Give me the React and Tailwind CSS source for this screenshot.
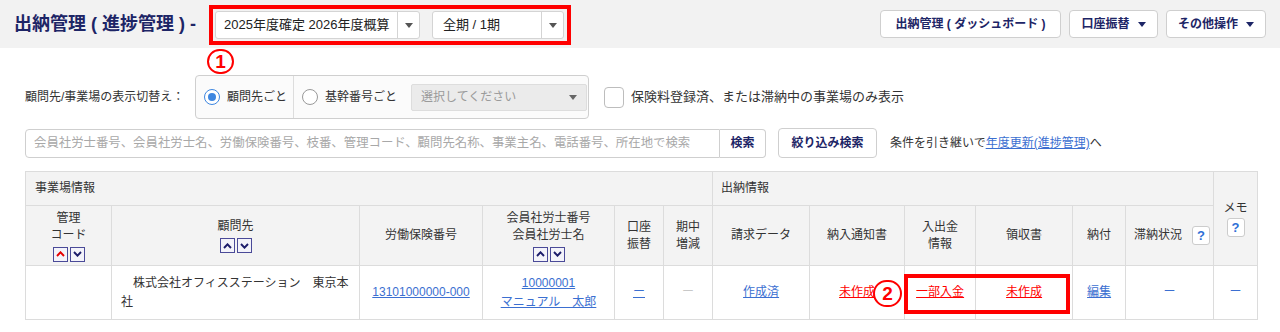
import React from "react";

const FONT = "font-['Liberation_Sans','Noto_Sans_CJK_JP',sans-serif]";

function Caret({ className = "fill-[#555]" }) {
  return (
    <svg width="8" height="5" viewBox="0 0 8 5" className={className}>
      <path d="M0 0 H8 L4 5 Z" />
    </svg>
  );
}

function SortBtns({ upActive }) {
  return (
    <div className="flex justify-center gap-[2px] mt-[3px]">
      <span className="w-[15px] h-[15px] border border-[#4a4a98] bg-[#f3f3fa] flex items-center justify-center">
        <svg width="9" height="6" viewBox="0 0 9 6" className={upActive ? "stroke-[#e60000]" : "stroke-[#1c1c6b]"}>
          <path d="M1 5 L4.5 1.3 L8 5" strokeWidth="1.9" fill="none" />
        </svg>
      </span>
      <span className="w-[15px] h-[15px] border border-[#4a4a98] bg-[#f3f3fa] flex items-center justify-center">
        <svg width="9" height="6" viewBox="0 0 9 6" className="stroke-[#1c1c6b]">
          <path d="M1 1 L4.5 4.7 L8 1" strokeWidth="1.9" fill="none" />
        </svg>
      </span>
    </div>
  );
}

function Help() {
  return (
    <span className="inline-flex w-[18px] h-[19px] items-center justify-center rounded-[3px] border border-[#ccc] bg-white text-[#2f6fd6] font-bold text-[13px] leading-none">
      ?
    </span>
  );
}

function Circled({ n, className }) {
  return (
    <span className={`absolute flex items-center justify-center rounded-full border-2 border-[#f00] text-[#f00] font-bold text-[19px] leading-none bg-white ${className}`}>
      {n}
    </span>
  );
}

export default function App() {
  const th = "border border-[#dcdcdc] bg-[#f3f3f3] font-normal text-[#333] text-[12px] leading-[17px]";
  const td = "border border-[#dcdcdc] text-[12px] leading-[19px] text-center";
  const link = "text-[#3b6fd1] underline";
  const red = "text-[#f00] underline";

  return (
    <div className={`relative w-[1280px] h-[332px] bg-white text-[#333] ${FONT}`}>
      {/* header */}
      <div className="h-[48px] bg-[#f2f2f2] flex items-center pl-[14px] pr-[14px]">
        <h1 className="text-[18px] font-bold text-[#1d2566] whitespace-nowrap">出納管理 ( 進捗管理 ) -</h1>
        <div className="ml-[13px] h-[40px] border-[4px] border-[#f00] flex items-center pl-[2px] pr-[3px] gap-[12px] self-start mt-[5px]">
          <div className="w-[205px] h-[28px] bg-white border border-[#d4d4d4] rounded-[3px] flex items-center">
            <span className="flex-1 pl-[8px] text-[13px] text-[#222] whitespace-nowrap">2025年度確定 2026年度概算</span>
            <span className="w-[22px] h-full border-l border-[#d4d4d4] flex items-center justify-center"><Caret /></span>
          </div>
          <div className="w-[132px] h-[28px] bg-white border border-[#d4d4d4] rounded-[3px] flex items-center">
            <span className="flex-1 pl-[10px] text-[13px] text-[#222] whitespace-nowrap">全期 / 1期</span>
            <span className="w-[22px] h-full border-l border-[#d4d4d4] flex items-center justify-center"><Caret /></span>
          </div>
        </div>
        <div className="ml-auto flex items-center gap-[8px]">
          <button className="h-[28px] w-[181px] bg-white border border-[#cfcfcf] rounded-[4px] text-[12px] font-bold text-[#1d2566]">出納管理 ( ダッシュボード )</button>
          <button className="h-[28px] w-[89px] bg-white border border-[#cfcfcf] rounded-[4px] text-[12px] font-bold text-[#1d2566] flex items-center justify-center gap-[8px]">口座振替 <Caret className="fill-[#1d2566]" /></button>
          <button className="h-[28px] w-[100px] bg-white border border-[#cfcfcf] rounded-[4px] text-[12px] font-bold text-[#1d2566] flex items-center justify-center gap-[8px]">その他操作 <Caret className="fill-[#1d2566]" /></button>
        </div>
      </div>

      {/* display switch row */}
      <div className="mt-[27px] pl-[25px] flex items-center">
        <span className="w-[170px] text-[12px] text-[#333] whitespace-nowrap">顧問先/事業場の表示切替え：</span>
        <div className="h-[44px] w-[394px] border border-[#cfcfcf] rounded-[4px] bg-[#fbfbfb] flex items-stretch">
          <label className="w-[98px] flex items-center pl-[8px] gap-[7px] border-r border-[#ddd] text-[12px] whitespace-nowrap">
            <span className="w-[16px] h-[16px] rounded-full border-[1.5px] border-[#3d86e0] bg-white flex items-center justify-center">
              <span className="w-[8px] h-[8px] rounded-full bg-[#3d86e0]" />
            </span>
            顧問先ごと
          </label>
          <label className="flex items-center pl-[8px] gap-[7px] text-[12px] whitespace-nowrap">
            <span className="w-[16px] h-[16px] rounded-full border border-[#999] bg-white" />
            基幹番号ごと
          </label>
          <div className="ml-[14px] my-auto w-[176px] h-[27px] bg-[#ebebeb] border border-[#ddd] rounded-[2px] flex items-center justify-between pl-[9px] pr-[9px]">
            <span className="text-[12px] text-[#9a9a9a]">選択してください</span>
            <Caret className="fill-[#666]" />
          </div>
        </div>
        <span className="ml-[15px] w-[20px] h-[21px] rounded-[4px] border border-[#bdbdbd] bg-white" />
        <span className="ml-[7px] text-[13px] text-[#333] whitespace-nowrap">保険料登録済、または滞納中の事業場のみ表示</span>
      </div>

      {/* search row */}
      <div className="mt-[9px] pl-[25px] flex items-center">
        <div className="w-[695px] h-[29px] border border-[#cfcfcf] rounded-l-[4px] flex items-center pl-[8px] text-[12.4px] text-[#a8a8a8] whitespace-nowrap overflow-hidden">
          会員社労士番号、会員社労士名、労働保険番号、枝番、管理コード、顧問先名称、事業主名、電話番号、所在地で検索
        </div>
        <button className="w-[46px] h-[29px] border border-l-0 border-[#cfcfcf] rounded-r-[4px] bg-white text-[12px] font-bold text-[#1d2566]">検索</button>
        <button className="ml-[12px] w-[99px] h-[30px] border border-[#cfcfcf] rounded-[4px] bg-white text-[12px] font-bold text-[#1d2566]">絞り込み検索</button>
        <span className="ml-[13px] text-[12px] text-[#333] whitespace-nowrap">
          条件を引き継いで<span className={link}>年度更新(進捗管理)</span>へ
        </span>
      </div>

      {/* table */}
      <div className="relative mt-[13px] ml-[25px] w-[1232px]">
        <table className="table-fixed w-[1232px] border-collapse">
          <colgroup>
            <col className="w-[86px]" />
            <col className="w-[248px]" />
            <col className="w-[123px]" />
            <col className="w-[132px]" />
            <col className="w-[49px]" />
            <col className="w-[49px]" />
            <col className="w-[97px]" />
            <col className="w-[95px]" />
            <col className="w-[71px]" />
            <col className="w-[97px]" />
            <col className="w-[53px]" />
            <col className="w-[88px]" />
            <col className="w-[44px]" />
          </colgroup>
          <thead>
            <tr className="h-[34px]">
              <th colSpan={6} className={`${th} text-left pl-[9px]`}>事業場情報</th>
              <th colSpan={6} className={`${th} text-left pl-[8px]`}>出納情報</th>
              <th rowSpan={2} className={`${th} text-center`}>
                <div>メモ</div>
                <div className="mt-[1px]"><Help /></div>
              </th>
            </tr>
            <tr className="h-[60px]">
              <th className={`${th} text-center`}>
                <div>管理</div>
                <div>コード</div>
                <SortBtns upActive />
              </th>
              <th className={`${th} text-center`}>
                <div>顧問先</div>
                <SortBtns />
              </th>
              <th className={`${th} text-center`}>労働保険番号</th>
              <th className={`${th} text-center`}>
                <div>会員社労士番号</div>
                <div>会員社労士名</div>
                <SortBtns />
              </th>
              <th className={`${th} text-center`}>
                <div>口座</div>
                <div>振替</div>
              </th>
              <th className={`${th} text-center`}>
                <div>期中</div>
                <div>増減</div>
              </th>
              <th className={`${th} text-center`}>請求データ</th>
              <th className={`${th} text-center`}>納入通知書</th>
              <th className={`${th} text-center`}>
                <div>入出金</div>
                <div>情報</div>
              </th>
              <th className={`${th} text-center`}>領収書</th>
              <th className={`${th} text-center`}>納付</th>
              <th className={`${th} text-left pl-[8px]`}>
                <div className="flex items-center gap-[10px]">
                  <span>滞納状況</span>
                  <Help />
                </div>
              </th>
            </tr>
          </thead>
          <tbody>
            <tr className="h-[54px]">
              <td className={td}></td>
              <td className={`${td} text-left pl-[9px] pr-[7px]`}>　株式会社オフィスステーション　東京本社</td>
              <td className={td}><span className={link}>13101000000-000</span></td>
              <td className={td}>
                <div><span className={link}>10000001</span></div>
                <div><span className={link}>マニュアル　太郎</span></div>
              </td>
              <td className={td}><span className={link}>ー</span></td>
              <td className={`${td} text-[#c8c8c8]`}>ー</td>
              <td className={td}><span className={link}>作成済</span></td>
              <td className={td}><span className={red}>未作成</span></td>
              <td className={td}><span className={red}>一部入金</span></td>
              <td className={td}><span className={red}>未作成</span></td>
              <td className={td}><span className={link}>編集</span></td>
              <td className={`${td} text-[#3b6fd1]`}>ー</td>
              <td className={`${td} text-[#3b6fd1]`}>ー</td>
            </tr>
          </tbody>
        </table>
        {/* annotation 2 */}
        <div className="absolute left-[879px] top-[103px] w-[166px] h-[40px] border-[4px] border-[#f00]" />
        <Circled n="2" className="left-[848px] top-[109px] w-[29px] h-[27px]" />
      </div>

      {/* annotation 1 */}
      <Circled n="1" className="left-[207px] top-[49px] w-[27px] h-[25px]" />
    </div>
  );
}
